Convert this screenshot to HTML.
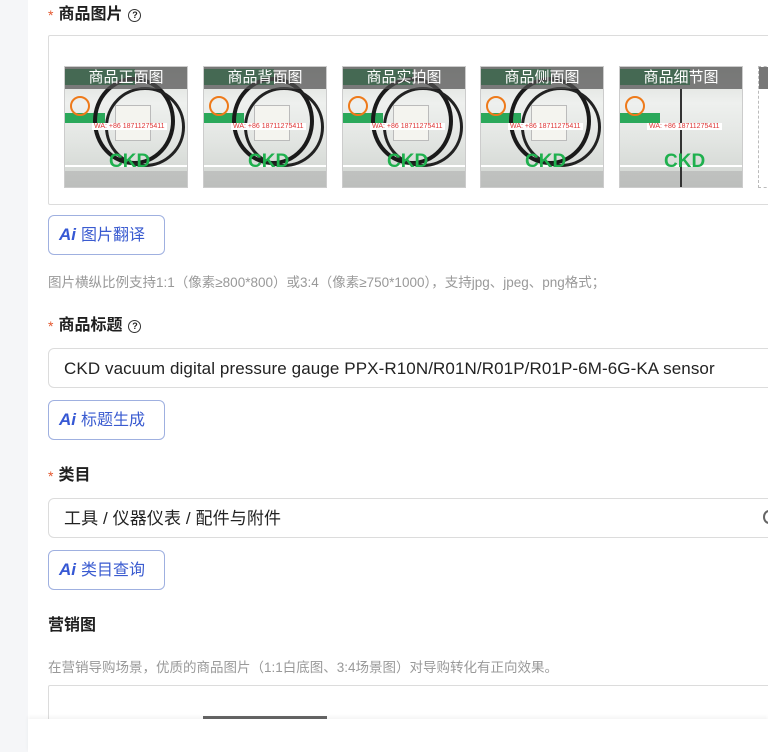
<!DOCTYPE html>
<html><head><meta charset="utf-8"><style>
*{margin:0;padding:0;box-sizing:border-box}
html,body{width:768px;height:752px;overflow:hidden}
body{background:#f5f6f8;font-family:"Liberation Sans","Noto Sans CJK SC",sans-serif;position:relative}
.main{position:absolute;left:28px;top:0;width:740px;height:752px;background:#fff}
.lbl{position:absolute;left:48px;font-size:16px;font-weight:bold;color:#1f1f1f;line-height:20px}
.lbl .s{color:#e4572e;font-weight:normal;font-size:14px;margin-right:5px;vertical-align:top}
.q{display:inline-block;width:13px;height:13px;border:1.3px solid #333;border-radius:50%;font-size:9px;line-height:11px;text-align:center;font-weight:bold;vertical-align:1px;margin-left:6px}
.box{position:absolute;left:48px;width:740px;border:1px solid #dcdcdc;border-radius:6px;background:#fff}
.inp{height:40px;font-size:17px;color:#222;padding-left:15px;line-height:40px;letter-spacing:0.1px}
.btn{position:absolute;left:48px;width:117px;height:40px;border:1px solid #9fb0e0;border-radius:6px;color:#3a5bd0;font-size:16px;line-height:38px;padding-left:10px;background:#fff}
.btn b{font-style:italic;font-weight:900;font-size:17px;margin-right:5px;color:#3658d4}
.hint{position:absolute;left:48px;font-size:13.5px;color:#999}
.img{position:absolute;top:66px;width:124px;height:122px;background:linear-gradient(180deg,#d9dcd8 0%,#eef0ee 30%,#e3e6e3 60%,#cfd3cf 100%);overflow:hidden;border:1px solid #ccc}
.img .h{position:absolute;left:0;top:0;width:100%;height:22px;background:rgba(80,80,80,.72);color:#fff;font-size:15px;text-align:center;line-height:22px}
.img .g{position:absolute;left:0;top:2px;width:70px;height:16px;background:#2aa85a}
.img .g3{position:absolute;left:0;top:46px;width:40px;height:10px;background:#2aa85a}
.img .g2{position:absolute;left:0;top:98px;width:124px;height:2px;background:#fff}
.img .bt{position:absolute;left:0;top:104px;width:124px;height:18px;background:#aaa;opacity:.5}
.img .c{position:absolute;left:28px;top:10px;width:82px;height:88px;border:4px solid #1a1a1a;border-radius:50%}
.img .c2{position:absolute;left:40px;top:20px;width:80px;height:80px;border:3px solid #222;border-radius:50%}
.img .w{position:absolute;left:50px;top:38px;width:36px;height:36px;background:#f4f4ef;border:1px solid #bbb}
.img .o{position:absolute;left:5px;top:29px;width:20px;height:20px;border:2px solid #ee7a1a;border-radius:50%}
.img .t{position:absolute;left:27px;top:56px;background:#fff;color:#d33;font-size:7px;padding:0 2px}
.img .k{position:absolute;left:44px;top:84px;color:#1fb04e;font-size:19px;font-weight:bold}
</style></head><body>
<div class="main"></div>
<div class="lbl" style="top:5px"><span class="s">*</span>商品图片<span class="q">?</span></div>
<div class="box" style="top:35px;height:170px;border-radius:2px"></div>
<div class="img" style="left:64px"><div class="g"></div><div class="g3"></div><div class="g2"></div><div class="bt"></div><div class="c"></div><div class="c2"></div><div class="w"></div><div class="o"></div><div class="t">WA: +86 18711275411</div><div class="k">CKD</div><div class="h">商品正面图</div></div>
<div class="img" style="left:203px"><div class="g"></div><div class="g3"></div><div class="g2"></div><div class="bt"></div><div class="c"></div><div class="c2"></div><div class="w"></div><div class="o"></div><div class="t">WA: +86 18711275411</div><div class="k">CKD</div><div class="h">商品背面图</div></div>
<div class="img" style="left:342px"><div class="g"></div><div class="g3"></div><div class="g2"></div><div class="bt"></div><div class="c"></div><div class="c2"></div><div class="w"></div><div class="o"></div><div class="t">WA: +86 18711275411</div><div class="k">CKD</div><div class="h">商品实拍图</div></div>
<div class="img" style="left:480px"><div class="g"></div><div class="g3"></div><div class="g2"></div><div class="bt"></div><div class="c"></div><div class="c2"></div><div class="w"></div><div class="o"></div><div class="t">WA: +86 18711275411</div><div class="k">CKD</div><div class="h">商品侧面图</div></div>
<div class="img" style="left:619px"><div class="g"></div><div class="g3"></div><div class="g2"></div><div class="bt"></div><div style="position:absolute;left:60px;top:22px;width:2px;height:100px;background:#333"></div><div class="o"></div><div class="t">WA: +86 18711275411</div><div class="k">CKD</div><div class="h">商品细节图</div></div>
<div style="position:absolute;left:758px;top:66px;width:20px;height:122px;border:1px dashed #bbb"><div style="height:22px;background:#777"></div></div>
<div class="btn" style="top:215px"><b>Ai</b>图片翻译</div>
<div class="hint" style="top:271px">图片横纵比例支持1:1（像素≥800*800）或3:4（像素≥750*1000），支持jpg、jpeg、png格式；</div>
<div class="lbl" style="top:316px"><span class="s">*</span>商品标题<span class="q">?</span></div>
<div class="box inp" style="top:348px">CKD vacuum digital pressure gauge PPX-R10N/R01N/R01P/R01P-6M-6G-KA sensor</div>
<div class="btn" style="top:400px"><b>Ai</b>标题生成</div>
<div class="lbl" style="top:466px"><span class="s">*</span>类目</div>
<div class="box inp" style="top:498px">工具 / 仪器仪表 / 配件与附件</div>
<div style="position:absolute;left:763px;top:510px;width:12px;height:14px;border:2px solid #666;border-radius:50%"></div>
<div class="btn" style="top:550px"><b>Ai</b>类目查询</div>
<div class="lbl" style="top:616px">营销图</div>
<div class="hint" style="top:656px">在营销导购场景，优质的商品图片（1:1白底图、3:4场景图）对导购转化有正向效果。</div>
<div class="box" style="top:685px;height:40px;border-radius:2px"></div>
<div style="position:absolute;left:203px;top:716px;width:124px;height:4px;background:#666"></div>
<div style="position:absolute;left:28px;top:719px;width:740px;height:33px;background:#fff;box-shadow:0 -2px 4px rgba(0,0,0,.05)"></div>
</body></html>
